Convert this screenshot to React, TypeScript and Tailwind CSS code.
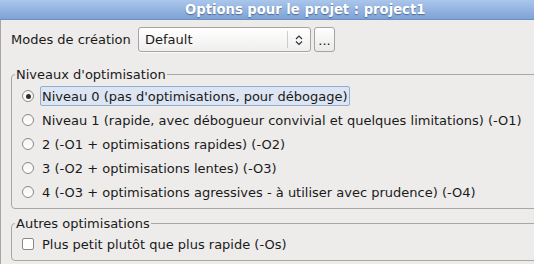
import { useState } from 'react'

const levels = [
  'Niveau 0 (pas d\'optimisations, pour débogage)',
  'Niveau 1 (rapide, avec débogueur convivial et quelques limitations) (-O1)',
  '2 (-O1 + optimisations rapides) (-O2)',
  '3 (-O2 + optimisations lentes) (-O3)',
  '4 (-O3 + optimisations agressives - à utiliser avec prudence) (-O4)',
]

function Radio({ checked }: { checked: boolean }) {
  return (
    <span className="flex h-[12px] w-[12px] shrink-0 items-center justify-center rounded-full border border-[#8b8b8b] bg-gradient-to-b from-[#f4f4f4] to-white">
      {checked && <span className="h-[5px] w-[5px] rounded-full bg-[#2e2e2e]" />}
    </span>
  )
}

export default function App() {
  const [level, setLevel] = useState(0)
  const [small, setSmall] = useState(false)

  return (
    <div className="h-[264px] w-[534px] overflow-hidden bg-[#edeceb] text-[13px] leading-[15px] text-[#1a1a1a]" style={{ fontFamily: '"DejaVu Sans", Verdana, sans-serif' }}>
      <div className="flex h-[20px] items-center border-b border-[#6d8fc2] bg-gradient-to-b from-[#aac6eb] to-[#7fa3d7] pl-[185px] text-[13.2px] font-bold text-white [text-shadow:0_1px_1px_rgba(40,60,100,0.6)]">
        Options pour le projet : project1
      </div>

      <div className="h-[244px] border-l border-[#a9a7a4]">
        <div className="flex items-center pt-[7px] pl-[10px]">
          <span className="w-[127px]">Modes de création</span>
          <div className="flex h-[25px] w-[173px] items-center rounded-[3px] border border-[#a4a4a4] bg-gradient-to-b from-white to-[#f0efee] pl-[6px] shadow-[0_1px_0_rgba(255,255,255,0.8)]">
            <span className="flex-1">Default</span>
            <span className="h-[17px] w-px bg-[#cfcdca]" />
            <svg width="22" height="14" viewBox="0 0 22 14" className="shrink-0">
              <path d="M8 6 L11 3 L14 6" fill="none" stroke="#333" strokeWidth="1.2" />
              <path d="M8 8.5 L11 11.5 L14 8.5" fill="none" stroke="#333" strokeWidth="1.2" />
            </svg>
          </div>
          <button className="ml-[3px] flex h-[25px] w-[21px] items-end justify-center rounded-[3px] border border-[#a4a4a4] bg-gradient-to-b from-white to-[#eceae8] pb-[6px] text-[13px] leading-[8px]">
            ...
          </button>
        </div>

        <fieldset className="mt-[15px] ml-[10px] -mr-[4px] rounded-[4px] border border-[#a9a7a4]">
          <legend className="ml-[3px] px-[1px] leading-[15px]">Niveaux d'optimisation</legend>
          <div className="pt-[2px] pb-[4px] pl-[10px]">
            {levels.map((text, i) => (
              <div key={i} className="flex h-[24px] items-center gap-[6px]" onClick={() => setLevel(i)}>
                <Radio checked={level === i} />
                <span
                  className={
                    level === i
                      ? 'flex h-[20px] items-center rounded-[2px] border border-[#93aed3] bg-[#dce5f1] px-[1px]'
                      : 'flex h-[20px] items-center border border-transparent px-[1px]'
                  }
                >
                  {text}
                </span>
              </div>
            ))}
          </div>
        </fieldset>

        <fieldset className="mt-[7px] ml-[10px] -mr-[4px] rounded-[4px] border border-[#a9a7a4]">
          <legend className="ml-[3px] px-[1px] leading-[15px]">Autres optimisations</legend>
          <div className="pt-[1px] pb-[4px] pl-[10px]">
            <div className="flex h-[24px] items-center gap-[6px]" onClick={() => setSmall(!small)}>
              <span className="flex h-[12px] w-[12px] shrink-0 items-center justify-center rounded-[2px] border border-[#8b8b8b] bg-white">
                {small && (
                  <svg width="9" height="9" viewBox="0 0 9 9">
                    <path d="M1.5 4.5 L3.5 6.5 L7.5 2" fill="none" stroke="#2e2e2e" strokeWidth="1.5" />
                  </svg>
                )}
              </span>
              <span className="border border-transparent px-[1px]">Plus petit plutôt que plus rapide (-Os)</span>
            </div>
          </div>
        </fieldset>
      </div>
    </div>
  )
}
